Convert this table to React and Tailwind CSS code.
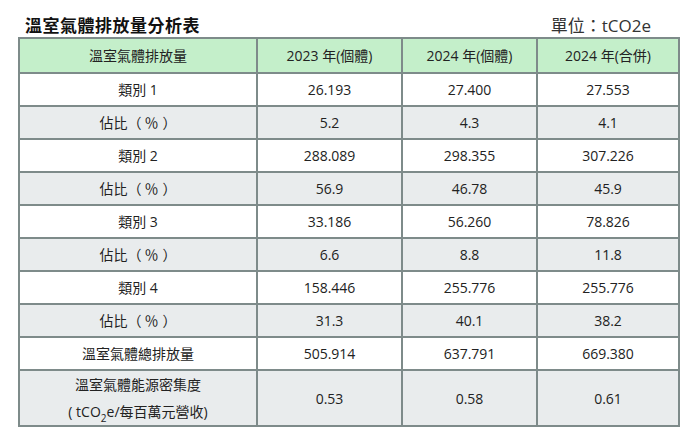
const rows = [
  { label: '類別 1', values: ['26.193', '27.400', '27.553'], shade: false },
  { label: 'pct', values: ['5.2', '4.3', '4.1'], shade: true },
  { label: '類別 2', values: ['288.089', '298.355', '307.226'], shade: false },
  { label: 'pct', values: ['56.9', '46.78', '45.9'], shade: true },
  { label: '類別 3', values: ['33.186', '56.260', '78.826'], shade: false },
  { label: 'pct', values: ['6.6', '8.8', '11.8'], shade: true },
  { label: '類別 4', values: ['158.446', '255.776', '255.776'], shade: false },
  { label: 'pct', values: ['31.3', '40.1', '38.2'], shade: true },
  { label: '溫室氣體總排放量', values: ['505.914', '637.791', '669.380'], shade: false },
];

const cell = 'border-2 border-[#7e8b8a] text-center align-middle';

// full-width punctuation, opened up like the source font draws it
function Share() {
  return (
    <span>
      佔比
      <span className="inline-block mr-[3px]">（</span>
      <span className="inline-block">％</span>
      <span className="inline-block ml-[4px]">）</span>
    </span>
  );
}

export default function App() {
  return (
    <div
      className="w-[697px] h-[441px] bg-white text-[#222] pl-[18px] pr-[19px]"
      style={{ fontFamily: '"Open Sans", "Noto Sans CJK TC", sans-serif' }}
    >
      {/* Title */}
      <div className="flex items-end justify-between h-[37px] pb-[3px]">
        <h1 className="pl-[7px] text-[17px] font-bold tracking-[0.5px] leading-none text-[#111]">
          溫室氣體排放量分析表
        </h1>
        <span className="pr-[27px] text-[17px] leading-none text-[#333]">單位：tCO2e</span>
      </div>

      {/* Table */}
      <table className="w-[660px] table-fixed border-collapse text-[14px]">
        <colgroup>
          <col className="w-[238px]" />
          <col className="w-[145px]" />
          <col className="w-[135px]" />
          <col className="w-[142px]" />
        </colgroup>
        <thead>
          <tr className="h-[35px] bg-[#c4efca]">
            <th className={`${cell} font-normal`}>溫室氣體排放量</th>
            <th className={`${cell} font-normal`}>2023 年(個體)</th>
            <th className={`${cell} font-normal`}>2024 年(個體)</th>
            <th className={`${cell} font-normal`}>2024 年(合併)</th>
          </tr>
        </thead>
        <tbody>
          {rows.map((r, i) => (
            <tr key={i} className={`h-[33px] ${r.shade ? 'bg-[#e9eced]' : 'bg-white'}`}>
              <td className={cell}>{r.label === 'pct' ? <Share /> : r.label}</td>
              {r.values.map((v, j) => (
                <td key={j} className={cell}>{v}</td>
              ))}
            </tr>
          ))}
          <tr className="h-[54px] bg-[#e9eced]">
            <td className={`${cell} leading-[27px]`}>
              <div>溫室氣體能源密集度</div>
              <div>( tCO<sub className="text-[10px] align-[-2px]">2</sub>e/每百萬元營收)</div>
            </td>
            <td className={cell}>0.53</td>
            <td className={cell}>0.58</td>
            <td className={cell}>0.61</td>
          </tr>
        </tbody>
      </table>
    </div>
  );
}
